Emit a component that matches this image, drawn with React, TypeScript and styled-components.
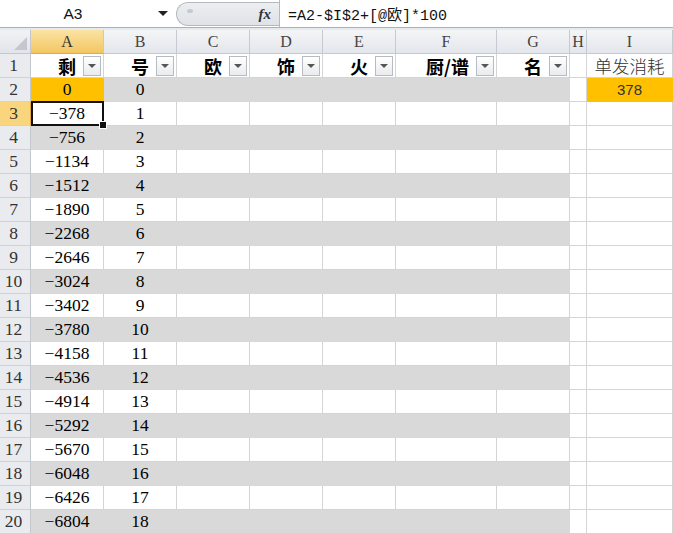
import React from "react";
import styled, { createGlobalStyle, css } from "styled-components";

const GlobalStyle = createGlobalStyle`
  html, body {
    margin: 0;
    padding: 0;
    background: #ffffff;
    overflow: hidden;
  }
  * {
    box-sizing: border-box;
  }
`;

const SERIF = `"Liberation Serif", "Noto Sans CJK SC", serif`;
const CJK = `"Noto Sans CJK SC", sans-serif`;
const GRID = "#d4d4d4";
const BAND = "#d9d9d9";
const ORANGE = "#ffc000";

const Window = styled.div`
  width: 673px;
  height: 533px;
  overflow: hidden;
  background: #e6e9ee;
  display: flex;
  flex-direction: column;
`;

const FormulaBar = styled.div`
  display: flex;
  align-items: stretch;
  height: 28px;
  background: #ffffff;
  border-bottom: 1px solid #a9b0ba;
  flex-shrink: 0;
`;

const NameBox = styled.div`
  width: 176px;
  display: flex;
  align-items: center;
  padding-right: 8px;
`;

const NameText = styled.span`
  flex: 1;
  text-align: center;
  font-family: "Liberation Sans", sans-serif;
  font-size: 15.5px;
  color: #111;
  padding-right: 12px;
`;

const DropArrow = styled.span`
  width: 0;
  height: 0;
  border-left: 5px solid transparent;
  border-right: 5px solid transparent;
  border-top: 5px solid #222;
`;

const FxPill = styled.div`
  width: 103px;
  margin: 2px 0 1px;
  border: 1px solid #b4b9c1;
  border-right: none;
  border-radius: 13px 0 0 13px;
  background: linear-gradient(#eceef1, #dfe2e7);
  display: flex;
  align-items: center;
  justify-content: space-between;
  padding: 0 8px 0 10px;
`;

const Grip = styled.span`
  width: 6px;
  height: 4px;
  border-radius: 50%;
  background: #c6c9cf;
  margin-top: -6px;
`;

const FxLabel = styled.span`
  font-family: "Liberation Serif", serif;
  font-style: italic;
  font-weight: 700;
  font-size: 15px;
  color: #333;
`;

const FormulaText = styled.div`
  flex: 1;
  border-left: 1px solid #b5bac2;
  display: flex;
  align-items: center;
  padding-left: 8px;
  font-family: "Liberation Mono", "Noto Sans CJK SC", monospace;
  font-size: 15px;
  color: #111;
  white-space: nowrap;
`;

const Sheet = styled.div`
  margin-top: 2px;
  display: grid;
  grid-template-columns: 31px 73px 73px 73px 73px 73px 101px 73px 17px 86px;
  grid-auto-rows: 24px;
  background: #ffffff;
`;

const Corner = styled.div`
  position: relative;
  background: linear-gradient(#f1f2f5, #e1e4e9);
  border-right: 1px solid #c3c8cf;
  border-bottom: 1px solid #c3c8cf;
  &::after {
    content: "";
    position: absolute;
    right: 3px;
    bottom: 3px;
    width: 0;
    height: 0;
    border-left: 13px solid transparent;
    border-bottom: 13px solid #c4c8ce;
  }
`;

const ColHead = styled.div<{ $active?: boolean }>`
  display: flex;
  align-items: center;
  justify-content: center;
  font-family: ${SERIF};
  font-size: 16px;
  color: #444;
  border-right: 1px solid #c5c9d0;
  border-bottom: 1px solid #c5c9d0;
  background: linear-gradient(#f4f5f7, #e3e6eb);
  ${(p) =>
    p.$active &&
    css`
      background: linear-gradient(#fbe3a4, #f3c662);
      border-bottom-color: #e2a93c;
      color: #333;
    `}
`;

const RowHead = styled.div<{ $active?: boolean }>`
  display: flex;
  align-items: center;
  justify-content: center;
  padding-right: 3px;
  font-family: ${SERIF};
  font-size: 17.5px;
  color: #333;
  background: #e9ebef;
  border-right: 1px solid #c3c8cf;
  border-bottom: 1px solid #cfd3d9;
  ${(p) =>
    p.$active &&
    css`
      background: #f9d57e;
      border-right-color: #e2a93c;
    `}
`;

type Fill = "white" | "band" | "orange";

const fills: Record<Fill, string> = {
  white: "#ffffff",
  band: BAND,
  orange: ORANGE,
};

const Cell = styled.div<{ $fill: Fill; $sans?: boolean }>`
  position: relative;
  display: flex;
  align-items: center;
  justify-content: center;
  font-family: ${(p) => (p.$sans ? `"Liberation Sans", sans-serif` : SERIF)};
  font-size: ${(p) => (p.$sans ? "15px" : "17.5px")};
  color: ${(p) => (p.$sans ? "#333" : "#000")};
  background: ${(p) => fills[p.$fill]};
  border-right: 1px solid ${(p) => (p.$fill === "white" ? GRID : fills[p.$fill])};
  border-bottom: 1px solid ${(p) => (p.$fill === "white" ? GRID : fills[p.$fill])};
`;

const HeaderCell = styled.div`
  display: flex;
  align-items: center;
  justify-content: flex-end;
  gap: 7px;
  padding-right: 2px;
  background: #ffffff;
  border-right: 1px solid ${GRID};
  border-bottom: 1px solid ${GRID};
  font-family: ${CJK};
  font-weight: 700;
  font-size: 18px;
  color: #000;
`;

const PlainHead = styled.div`
  display: flex;
  align-items: center;
  justify-content: center;
  background: #ffffff;
  border-right: 1px solid ${GRID};
  border-bottom: 1px solid ${GRID};
  font-family: ${CJK};
  font-weight: 300;
  font-size: 17.5px;
  color: #333;
`;

const FilterButton = styled.span`
  width: 18px;
  height: 20px;
  border: 1px solid #b7bbc2;
  background: linear-gradient(#ffffff, #e9ebee);
  display: flex;
  align-items: center;
  justify-content: center;
  &::after {
    content: "";
    border-left: 4px solid transparent;
    border-right: 4px solid transparent;
    border-top: 4px solid #555;
  }
`;

const Selection = styled.span`
  position: absolute;
  top: -1px;
  left: 0;
  right: -1px;
  bottom: -1px;
  border: 2px solid #111;
  z-index: 2;
  pointer-events: none;
`;

const FillHandle = styled.span`
  position: absolute;
  right: -4px;
  bottom: -4px;
  width: 6px;
  height: 6px;
  background: #111;
  outline: 1px solid #fff;
`;

const COLS = ["A", "B", "C", "D", "E", "F", "G", "H", "I"];
const TABLE_HEADS = ["剩", "号", "欧", "饰", "火", "厨/谱", "名"];
const COST = 378;

const fmt = (n: number) => (n < 0 ? `\u2212${Math.abs(n)}` : `${n}`);

export default function App() {
  const rows = Array.from({ length: 19 }, (_, i) => i + 2);

  return (
    <>
      <GlobalStyle />
      <Window>
        <FormulaBar>
          <NameBox>
            <NameText>A3</NameText>
            <DropArrow />
          </NameBox>
          <FxPill>
            <Grip />
            <FxLabel>fx</FxLabel>
          </FxPill>
          <FormulaText>=A2-$I$2+[@欧]*100</FormulaText>
        </FormulaBar>

        <Sheet>
          <Corner />
          {COLS.map((c) => (
            <ColHead key={c} $active={c === "A"}>
              {c}
            </ColHead>
          ))}

          <RowHead>1</RowHead>
          {TABLE_HEADS.map((h) => (
            <HeaderCell key={h}>
              <span>{h}</span>
              <FilterButton />
            </HeaderCell>
          ))}
          <PlainHead />
          <PlainHead>单发消耗</PlainHead>

          {rows.map((r) => {
            const n = r - 2;
            const banded = r % 2 === 0;
            const tableFill: Fill = banded ? "band" : "white";
            return (
              <React.Fragment key={r}>
                <RowHead $active={r === 3}>{r}</RowHead>
                <Cell $fill={r === 2 ? "orange" : tableFill}>
                  {fmt(-n * COST)}
                  {r === 3 && (
                    <Selection>
                      <FillHandle />
                    </Selection>
                  )}
                </Cell>
                <Cell $fill={tableFill}>{n}</Cell>
                {["C", "D", "E", "F", "G"].map((c) => (
                  <Cell key={c} $fill={tableFill} />
                ))}
                <Cell $fill="white" />
                <Cell $fill={r === 2 ? "orange" : "white"} $sans>
                  {r === 2 ? COST : ""}
                </Cell>
              </React.Fragment>
            );
          })}
        </Sheet>
      </Window>
    </>
  );
}
